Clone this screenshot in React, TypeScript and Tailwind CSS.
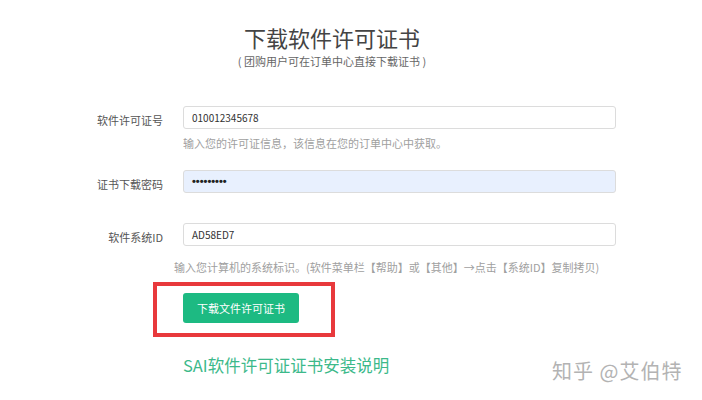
import React from "react";

const font = { fontFamily: '"Noto Sans CJK SC", "Noto Sans", sans-serif' };

function Row({ label, children, bg }: { label: string; children: React.ReactNode; bg?: boolean }) {
  return (
    <div className="flex items-center">
      <div className="w-[163px] text-right text-[11px] leading-[16px] text-[#555] pt-[4px]">{label}</div>
      <div
        className={
          "ml-[20px] w-[433px] h-[23px] rounded-[3px] border border-[#dcdcdc] flex items-center pl-[8px] text-[10px] text-[#333] " +
          (bg ? "bg-[#e8f0fe]" : "bg-white")
        }
      >
        {children}
      </div>
    </div>
  );
}

export default function App() {
  return (
    <div className="w-[702px] h-[400px] bg-white relative overflow-hidden" style={font}>
      <div className="w-[664px] text-center pt-[21px]">
        <div className="text-[22px] leading-[32px] text-[#444]">下载软件许可证书</div>
        <div className="text-[11px] leading-[16px] text-[#666]">( 团购用户可在订单中心直接下载证书 )</div>
      </div>

      <div className="mt-[37px]">
        <Row label="软件许可证号">010012345678</Row>
        <div className="ml-[183px] mt-[6px] text-[11px] leading-[16px] text-[#a0a0a0]">
          输入您的许可证信息，该信息在您的订单中心中获取。
        </div>
      </div>

      <div className="mt-[19px]">
        <Row label="证书下载密码" bg>
          <span
            className="text-[11px] font-bold text-[#222]"
            style={{ fontFamily: '"Liberation Sans", sans-serif' }}
          >
            •••••••••
          </span>
        </Row>
      </div>

      <div className="mt-[30px]">
        <Row label="软件系统ID">AD58ED7</Row>
        <div className="ml-[174px] mt-[13px] text-[11px] leading-[16px] text-[#a0a0a0] whitespace-nowrap">
          输入您计算机的系统标识。(软件菜单栏【帮助】或【其他】→点击【系统ID】复制拷贝)
        </div>
      </div>

      <div className="ml-[153px] mt-[7px] w-[182px] h-[55px] border-4 border-[#e8393c] pl-[26px] pt-[7px]">
        <div className="w-[116px] h-[30px] rounded-[3px] bg-[#1dba82] text-white text-[11px] flex items-center justify-center">
          下载文件许可证书
        </div>
      </div>

      <div className="ml-[183px] mt-[17px] text-[16.5px] leading-[22px] text-[#3cb98a] whitespace-nowrap">
        SAI软件许可证证书安装说明
      </div>

      <div className="absolute left-[552px] top-[358px] text-[20px] leading-[26px] tracking-[1px] text-[#b3b3b3] whitespace-nowrap">
        知乎 @艾伯特
      </div>
    </div>
  );
}
